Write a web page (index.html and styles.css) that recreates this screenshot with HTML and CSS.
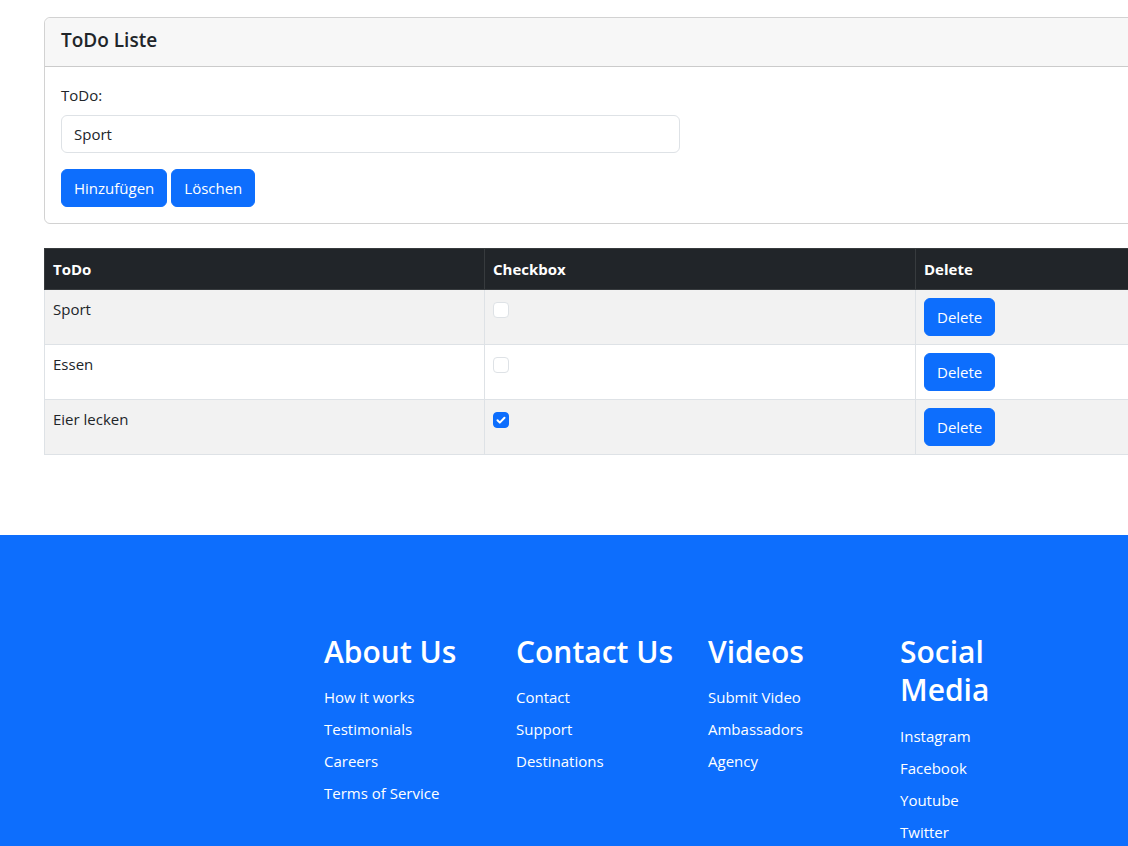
FILE: index.html
```html
<!DOCTYPE html>
<html lang="de">
<head>
<meta charset="utf-8">
<title>ToDo Liste</title>
<link rel="stylesheet" href="styles.css">
</head>
<body>
<main class="page">
  <section class="card">
    <div class="card-header"><h5 class="card-title">ToDo Liste</h5></div>
    <div class="card-body">
      <label class="form-label" for="todo">ToDo:</label>
      <input class="form-control" id="todo" type="text" value="Sport">
      <div class="btn-row">
        <button class="btn">Hinzufügen</button>
        <button class="btn">Löschen</button>
      </div>
    </div>
  </section>

  <table class="table">
    <colgroup>
      <col class="c1"><col class="c2"><col class="c3">
    </colgroup>
    <thead>
      <tr><th>ToDo</th><th>Checkbox</th><th>Delete</th></tr>
    </thead>
    <tbody>
      <tr class="odd"><td>Sport</td><td><span class="check"></span></td><td><button class="btn">Delete</button></td></tr>
      <tr><td>Essen</td><td><span class="check"></span></td><td><button class="btn">Delete</button></td></tr>
      <tr class="odd"><td>Eier lecken</td><td><span class="check checked"><svg viewBox="0 0 16 16" width="16" height="16"><path d="M4.5 8.3l2.3 2.3 4.7-4.9" fill="none" stroke="#fff" stroke-width="2" stroke-linecap="round" stroke-linejoin="round"/></svg></span></td><td><button class="btn">Delete</button></td></tr>
    </tbody>
  </table>
</main>

<footer class="footer">
  <div class="footer-row">
    <div class="footer-col">
      <h2>About Us</h2>
      <ul><li>How it works</li><li>Testimonials</li><li>Careers</li><li>Terms of Service</li></ul>
    </div>
    <div class="footer-col">
      <h2>Contact Us</h2>
      <ul><li>Contact</li><li>Support</li><li>Destinations</li></ul>
    </div>
    <div class="footer-col">
      <h2>Videos</h2>
      <ul><li>Submit Video</li><li>Ambassadors</li><li>Agency</li></ul>
    </div>
    <div class="footer-col">
      <h2>Social Media</h2>
      <ul><li>Instagram</li><li>Facebook</li><li>Youtube</li><li>Twitter</li></ul>
    </div>
  </div>
</footer>
</body>
</html>
```

FILE: styles.css
```css
html { overflow-x: hidden; }
body {
  margin: 0;
  font-family: "Open Sans", "Noto Sans", sans-serif;
  font-size: 15px;
  line-height: 1.5;
  color: #212529;
  background: #fff;
}
.page {
  padding: 17px 0 0 44px;
  width: 1240px;
}
.card {
  border: 1px solid rgba(0,0,0,.175);
  border-radius: 6px;
  margin-bottom: 24px;
}
.card-header {
  background: #f7f7f7;
  padding: 8px 16px;
  border-bottom: 1px solid rgba(0,0,0,.175);
  border-radius: 6px 6px 0 0;
}
.card-title {
  margin: 2px 0 6px;
  font-size: 19px;
  font-weight: 600;
  line-height: 24px;
}
.card-body { padding: 16px; }
.form-label { display: block; margin-bottom: 8px; line-height: 24px; }
.form-control {
  display: block;
  box-sizing: border-box;
  width: 619px;
  height: 38px;
  padding: 6px 12px;
  font: inherit;
  color: #212529;
  border: 1px solid #dee2e6;
  border-radius: 6px;
  margin-bottom: 16px;
}
.btn-row { display: flex; gap: 4px; }
.btn {
  font: inherit;
  color: #fff;
  background: #0d6efd;
  border: 1px solid #0d6efd;
  border-radius: 6px;
  padding: 6px 12px;
  line-height: 24px;
  height: 38px;
}
.table {
  border-collapse: collapse;
  table-layout: fixed;
  width: 1240px;
  vertical-align: top;
}
.c1 { width: 440px; }
.c2 { width: 431px; }
.table th {
  background: #212529;
  color: #fff;
  text-align: left;
  font-weight: 700;
  font-size: 15px;
  padding: 8px;
  line-height: 24px;
  border: 1px solid #373b3e;
}
.table td {
  padding: 8px;
  border: 1px solid #dee2e6;
  vertical-align: top;
  height: 38px;
}
.table tr.odd td { background: #f2f2f2; }
.check {
  display: block;
  width: 16px;
  height: 16px;
  margin-top: 4px;
  box-sizing: border-box;
  border: 1px solid #dee2e6;
  border-radius: 4px;
  background: #fff;
}
.check.checked { background: #0d6efd; border-color: #0d6efd; }
.check svg { display: block; margin: -1px; }
.footer {
  margin-top: 80px;
  background: #0d6efd;
  color: #fff;
  padding: 98px 0 40px 312px;
}
.footer-row { display: flex; }
.footer-col { width: 168px; padding: 0 12px; }
.footer h2 {
  margin: 0 0 14px;
  font-size: 30px;
  font-weight: 600;
  line-height: 38.4px;
}
.footer ul { list-style: none; margin: 0; padding: 0; }
.footer li { line-height: 24px; margin-bottom: 8px; font-size: 15px; }
```
